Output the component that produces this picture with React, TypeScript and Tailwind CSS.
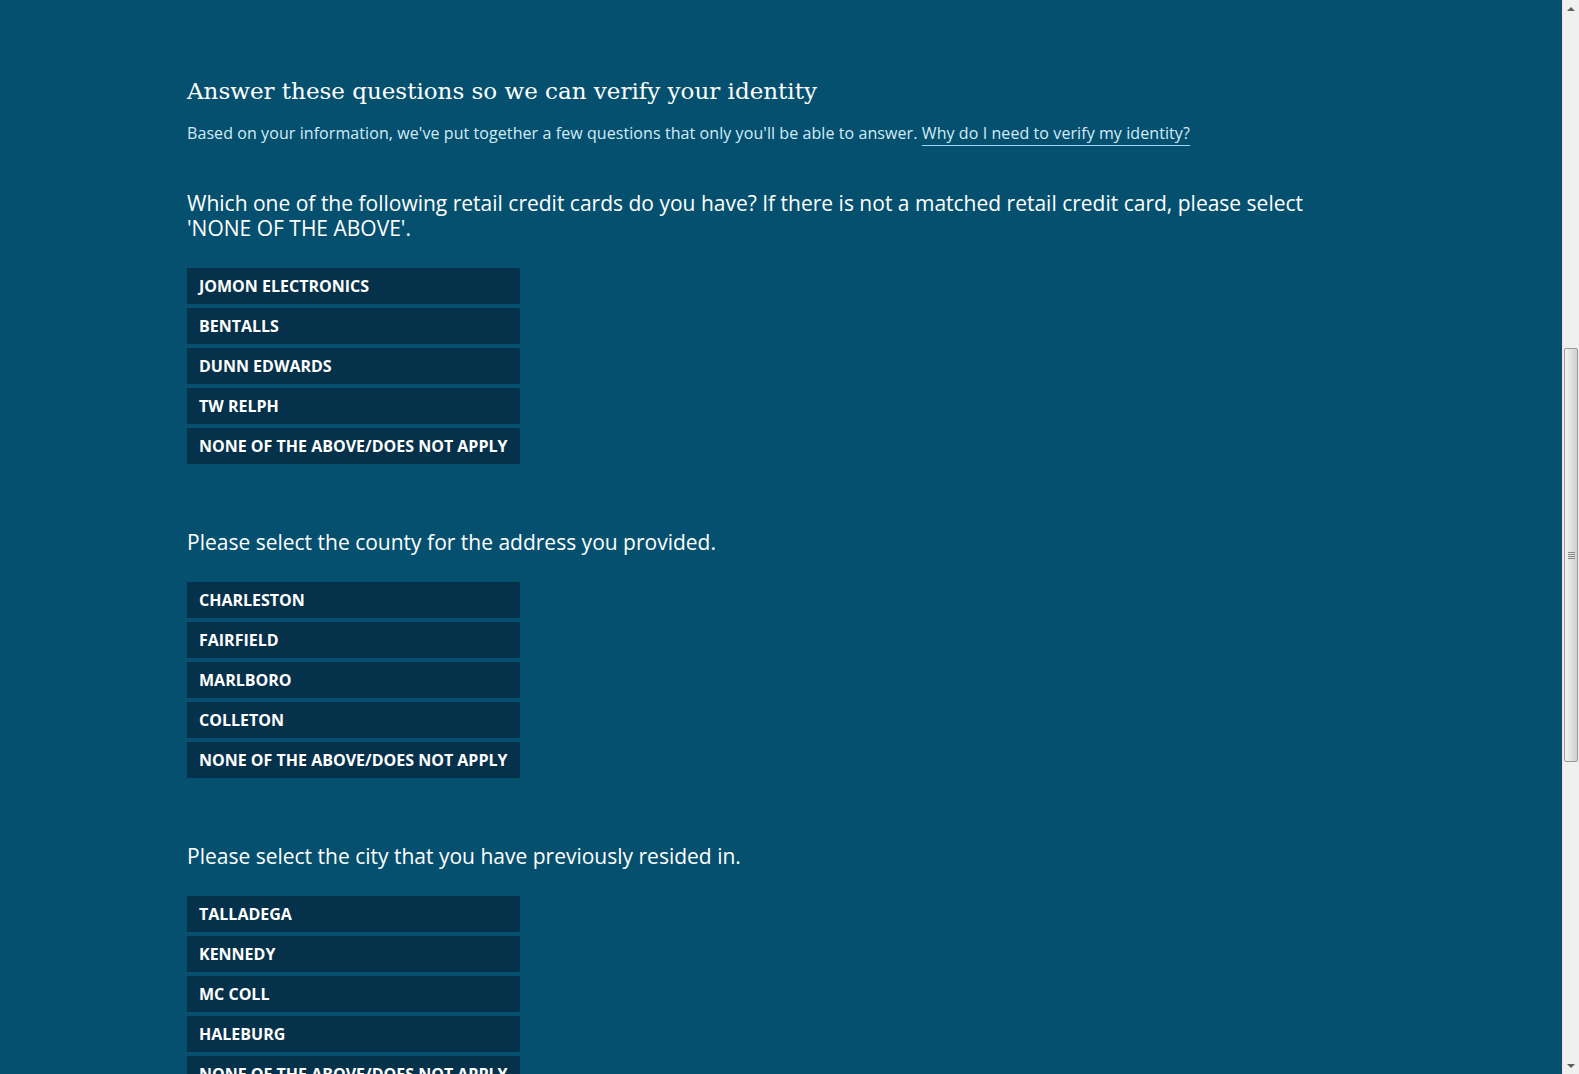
const questions = [
  {
    text: "Which one of the following retail credit cards do you have? If there is not a matched retail credit card, please select 'NONE OF THE ABOVE'.",
    options: ["JOMON ELECTRONICS", "BENTALLS", "DUNN EDWARDS", "TW RELPH", "NONE OF THE ABOVE/DOES NOT APPLY"],
  },
  {
    text: "Please select the county for the address you provided.",
    options: ["CHARLESTON", "FAIRFIELD", "MARLBORO", "COLLETON", "NONE OF THE ABOVE/DOES NOT APPLY"],
  },
  {
    text: "Please select the city that you have previously resided in.",
    options: ["TALLADEGA", "KENNEDY", "MC COLL", "HALEBURG", "NONE OF THE ABOVE/DOES NOT APPLY"],
  },
];

function Scrollbar() {
  return (
    <div className="flex h-full w-[17px] shrink-0 flex-col border-l border-[#e6e6e6] bg-[#f0f0f0]">
      <div className="flex h-[17px] items-center justify-center">
        <div className="h-0 w-0 border-x-[4px] border-b-[4px] border-x-transparent border-b-[#606060]" />
      </div>
      <div className="h-[331px]" />
      <div className="mx-[1px] flex h-[414px] items-center justify-center rounded-[2px] border border-[#9a9a9a] bg-gradient-to-r from-[#f4f4f4] via-[#e2e2e2] to-[#cfcfcf]">
        <div className="flex flex-col gap-[1px]">
          <div className="h-px w-[7px] bg-[#8a8a8a]" />
          <div className="h-px w-[7px] bg-[#8a8a8a]" />
          <div className="h-px w-[7px] bg-[#8a8a8a]" />
          <div className="h-px w-[7px] bg-[#8a8a8a]" />
        </div>
      </div>
      <div className="flex-1" />
      <div className="flex h-[17px] items-center justify-center">
        <div className="h-0 w-0 border-x-[4px] border-t-[4px] border-x-transparent border-t-[#606060]" />
      </div>
    </div>
  );
}

export default function App() {
  return (
    <div className="flex h-[1074px] w-full overflow-hidden bg-[#05506f] font-['Open_Sans',sans-serif]">
      <main className="flex-1 overflow-hidden">
        <div className="mx-auto w-[1188px] pt-[73px]">
          {/* Header */}
          <h1 className="font-['DejaVu_Serif',serif] text-[23px] leading-[36px] text-white">
            Answer these questions so we can verify your identity
          </h1>
          <p className="mt-[12px] text-[16px] leading-[24px] tracking-[0.08px] text-[#d3ecf8]">
            Based on your information, we've put together a few questions that only you'll be able to answer.{" "}
            <a href="#" className="border-b border-[#9fd6f2] pb-[1px]">
              Why do I need to verify my identity?
            </a>
          </p>

          {/* Questions */}
          <div className="mt-[46px] flex flex-col gap-[66px]">
            {questions.map((q) => (
              <section key={q.text}>
                <h2 className="pr-[70px] text-[21px] leading-[25px] text-white">{q.text}</h2>
                <div className="mt-[27px] flex flex-col gap-[4px]">
                  {q.options.map((opt) => (
                    <button
                      key={opt}
                      className="flex h-[36px] w-[333px] items-center bg-[#06314a] px-[12px] text-left text-[16px] font-bold text-white"
                    >
                      {opt}
                    </button>
                  ))}
                </div>
              </section>
            ))}
          </div>
        </div>
      </main>
      <Scrollbar />
    </div>
  );
}
